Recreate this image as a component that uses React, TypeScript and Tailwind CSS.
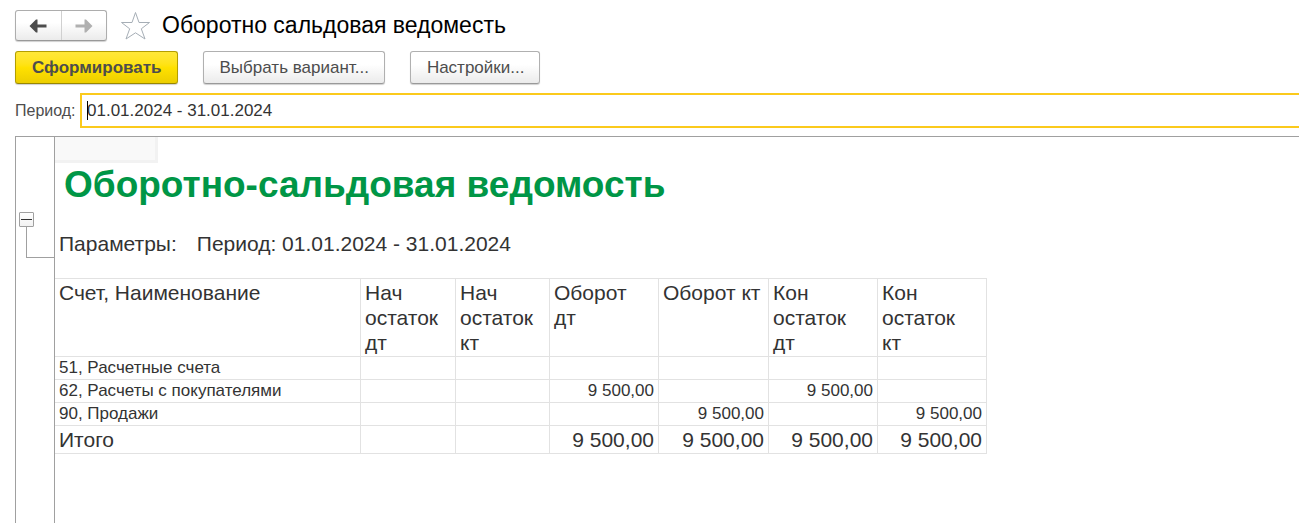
import { useState } from 'react';

type Row = { name: string; values: string[]; total?: boolean };

const columns = [
  'Счет, Наименование',
  'Нач\nостаток\nдт',
  'Нач\nостаток\nкт',
  'Оборот\nдт',
  'Оборот кт',
  'Кон\nостаток\nдт',
  'Кон\nостаток\nкт',
];

const rows: Row[] = [
  { name: '51, Расчетные счета', values: ['', '', '', '', '', ''] },
  { name: '62, Расчеты с покупателями', values: ['', '', '9 500,00', '', '9 500,00', ''] },
  { name: '90, Продажи', values: ['', '', '', '9 500,00', '', '9 500,00'] },
  { name: 'Итого', values: ['', '', '9 500,00', '9 500,00', '9 500,00', '9 500,00'], total: true },
];

function Arrow({ className }: { className: string }) {
  return (
    <svg viewBox="0 0 18 14" className={`h-[14px] w-[18px] ${className}`} fill="currentColor" aria-hidden="true">
      <path d="M0.5 7 7 0.5H8.5V5.5H17.5V8.5H8.5V13.5H7Z" />
    </svg>
  );
}

function NavButtons() {
  return (
    <div className="flex h-[31px] w-[92px] overflow-hidden rounded-[3px] border border-[#adadad] border-b-[#999] bg-linear-to-b from-white from-40% to-[#ebebeb] shadow-[0_1px_1px_#d0d0d0]">
      <button type="button" aria-label="Назад" className="flex flex-1 items-center justify-center border-r border-[#d0d0d0] text-[#4d4d4d]">
        <Arrow className="" />
      </button>
      <button type="button" aria-label="Вперед" className="flex flex-1 items-center justify-center text-[#b0b0b0]">
        <Arrow className="rotate-180" />
      </button>
    </div>
  );
}

function ToolButton({ children }: { children: string }) {
  return (
    <button
      type="button"
      className="h-[33px] rounded-[3px] border border-[#b0b0b0] border-b-[#999] bg-linear-to-b from-white from-40% to-[#ebebeb] pl-4 pr-[15px] text-[17px] text-[#4d4d4d] shadow-[0_1px_1px_#d0d0d0]"
    >
      {children}
    </button>
  );
}

export default function App() {
  const [period, setPeriod] = useState('01.01.2024 - 31.01.2024');

  return (
    <div className="flex min-h-screen flex-col overflow-hidden bg-white pl-[15px] pt-[10px] font-['Liberation_Sans',Arial,sans-serif] text-[#333]">
      <header className="flex h-[31px] items-center">
        <NavButtons />
        <button type="button" aria-label="Добавить в избранное" className="ml-[13px]">
          <svg viewBox="0 0 32 30" className="h-[30px] w-[32px]" fill="none" stroke="#a6aeb6" strokeWidth="1" aria-hidden="true">
            <path d="M15.5 1.5 19 11.5H29.5L21.3 17.8 25 28 15.5 21.8 6 28 9.7 17.8 1.5 11.5H12Z" />
          </svg>
        </button>
        <h1 className="ml-[10px] text-[23px] text-black">Оборотно сальдовая ведоместь</h1>
      </header>

      <div className="mt-[10px] flex gap-[25px]">
        <button
          type="button"
          className="h-[33px] rounded-[3px] border border-[#b39e00] border-b-[#998700] bg-linear-to-b from-[#ffe838] via-[#ffe100] to-[#ecce00] pl-4 pr-[15px] text-[17px] font-bold text-[#4d4d4d] shadow-[0_1px_1px_#d0d0d0]"
        >
          Сформировать
        </button>
        <ToolButton>Выбрать вариант...</ToolButton>
        <ToolButton>Настройки...</ToolButton>
      </div>

      <div className="mt-[9px] flex items-center">
        <label htmlFor="period" className="w-[65px] shrink-0 text-[16px] text-[#4d4d4d]">
          Период:
        </label>
        <div className="relative flex-1">
          <input
            id="period"
            value={period}
            onChange={(e) => setPeriod(e.target.value)}
            className="block h-[35px] w-full border-2 border-r-0 border-[#fbca1c] bg-white px-[5px] text-[17px] text-[#333] outline-none"
          />
          <span className="absolute left-[7px] top-[8px] h-[19px] w-px bg-black" />
        </div>
      </div>

      <main className="mt-2 flex flex-1 border-l border-t border-[#a0a0a0]">
        <div className="w-[39px] shrink-0 border-r border-[#a0a0a0] pt-[75px]">
          <button
            type="button"
            aria-label="Свернуть группу"
            className="ml-[3px] flex h-[15px] w-[15px] items-center justify-center rounded-[1px] border border-[#a0a0a0] bg-linear-to-b from-white to-[#f2f2f2]"
          >
            <span className="h-px w-[11px] bg-[#333]" />
          </button>
          <div className="ml-[10px] h-[31px] border-b border-l border-[#a0a0a0]" />
        </div>

        <div className="min-w-0 flex-1">
          <div className="h-[26px] w-[103px] border-b-[3px] border-r-[3px] border-[#f2f2f2] bg-[#f9f9f9]" />
          <h2 className="pl-[9px] text-[37px] leading-[44px] font-bold text-[#009646]">Оборотно-сальдовая ведомость</h2>
          <div className="mt-[24px] flex gap-[20px] pl-1 text-[21px] leading-[26px]">
            <span>Параметры:</span>
            <span>Период: {period}</span>
          </div>

          <table className="mt-[21px] w-[932px] table-fixed border-separate border-spacing-0 border-t border-[#e2e2e2]">
            <colgroup>
              <col className="w-[306px]" />
              <col className="w-[95px]" />
              <col className="w-[94px]" />
              <col className="w-[109px]" />
              <col className="w-[110px]" />
              <col className="w-[109px]" />
              <col className="w-[109px]" />
            </colgroup>
            <thead>
              <tr className="h-[78px]">
                {columns.map((c) => (
                  <th
                    key={c}
                    scope="col"
                    className="border-b border-r border-[#e2e2e2] pl-1 pt-px text-left align-top text-[21px] leading-[25px] font-normal whitespace-pre-line"
                  >
                    {c}
                  </th>
                ))}
              </tr>
            </thead>
            <tbody>
              {rows.map((r) => (
                <tr key={r.name} className={r.total ? 'h-[28px] text-[21px] leading-[26px]' : 'h-[23px] text-[17px] leading-[22px]'}>
                  <th scope="row" className="border-b border-r border-[#e2e2e2] pl-1 text-left font-normal">
                    {r.name}
                  </th>
                  {r.values.map((v, i) => (
                    <td key={i} className="border-b border-r border-[#e2e2e2] pr-1 text-right">
                      {v}
                    </td>
                  ))}
                </tr>
              ))}
            </tbody>
          </table>
        </div>
      </main>
    </div>
  );
}
